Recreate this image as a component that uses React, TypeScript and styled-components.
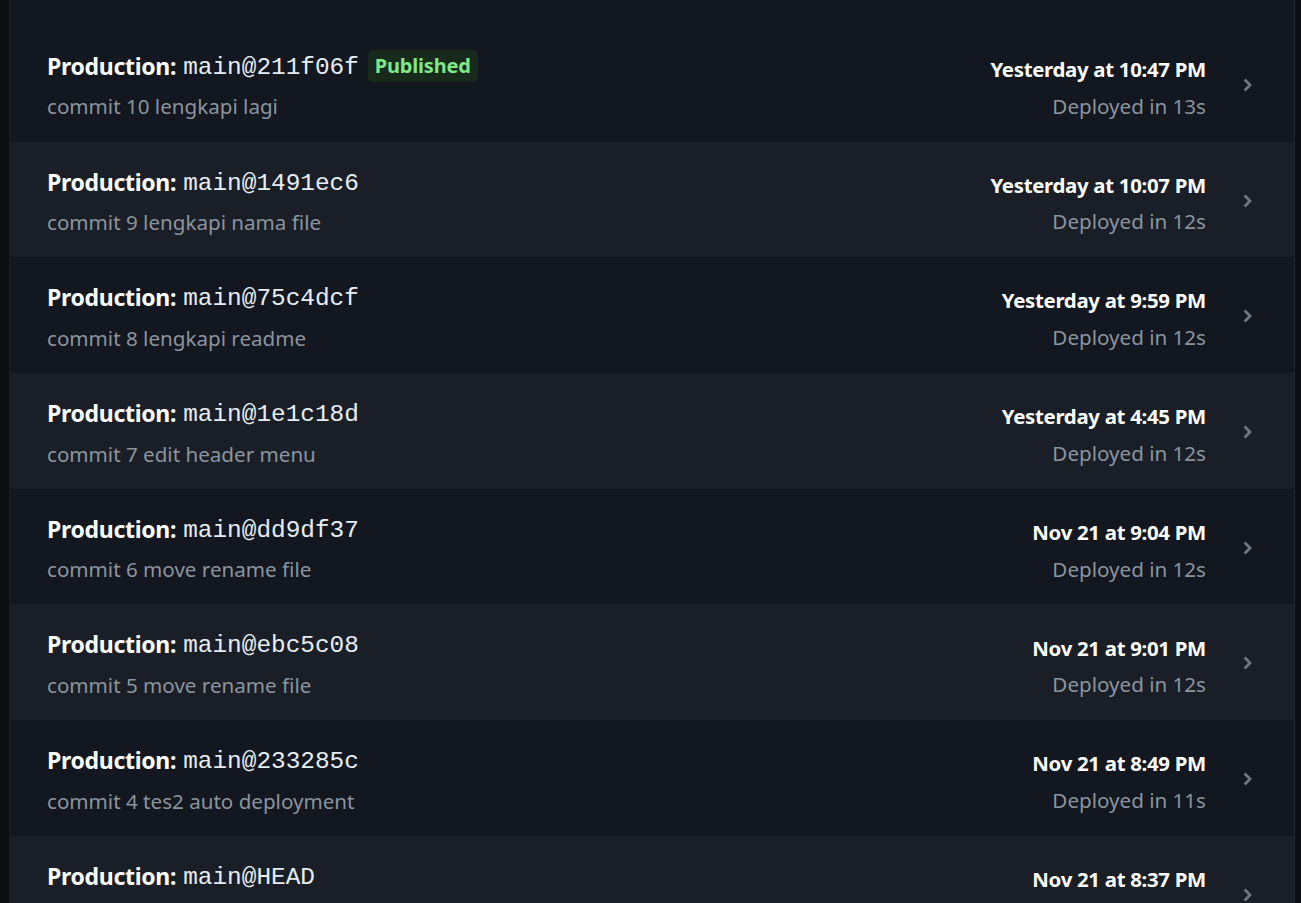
import React from "react";
import styled, { createGlobalStyle } from "styled-components";

const Global = createGlobalStyle`
  html, body { margin: 0; padding: 0; background: #0b0e13; }
  body { font-family: "Noto Sans", "Open Sans", sans-serif; }
`;

const Page = styled.div`
  display: flex;
  height: 903px;
  overflow: hidden;
  background: #0b0e13;
`;

const Panel = styled.div`
  margin-left: 9px;
  width: 1286px;
  border-left: 1px solid #1a1f26;
  border-right: 1px solid #232830;
  background: #121720;
  padding-top: 26px;
  box-sizing: border-box;
`;

const Row = styled.div<{ $alt: boolean }>`
  display: flex;
  align-items: center;
  height: 115.7px;
  padding: 0 41px 0 37px;
  background: ${(p) => (p.$alt ? "#1a1f27" : "#121720")};
  box-sizing: border-box;
`;

const Left = styled.div`
  flex: 1;
  display: flex;
  flex-direction: column;
  gap: 10.5px;
  margin-top: 3.4px;
`;

const TitleLine = styled.div`
  display: flex;
  align-items: center;
  height: 32px;
`;

const Label = styled.span`
  font-size: 23px;
  font-weight: 700;
  color: #ffffff;
  letter-spacing: -0.3px;
`;

const Ref = styled.span`
  font-family: "Liberation Mono", "Courier New", monospace;
  font-size: 24.4px;
  color: #e6edf3;
  margin-left: 7px;
  margin-top: 3px;
`;

const Badge = styled.span`
  margin-left: 9px;
  padding: 2px 7px 3px;
  border-radius: 5px;
  background: #172a1c;
  color: #7ee787;
  font-size: 20px;
  font-weight: 700;
  letter-spacing: -0.2px;
`;

const Message = styled.div`
  font-size: 20.6px;
  line-height: 28.6px;
  color: #8b949e;
`;

const Right = styled.div`
  display: flex;
  flex-direction: column;
  align-items: flex-end;
  gap: 8px;
  margin-top: 8.8px;
`;

const When = styled.div`
  font-size: 20.4px;
  line-height: 27.7px;
  font-weight: 700;
  color: #ffffff;
  letter-spacing: -0.3px;
`;

const Duration = styled.div`
  font-size: 20.6px;
  line-height: 28.6px;
  color: #8b949e;
`;

const Chevron = styled.div`
  width: 10px;
  margin-left: 37px;
  margin-top: 2px;
  display: flex;
  align-items: center;
  justify-content: center;
  color: #6e7681;
`;

type Deploy = { ref: string; msg: string; when: string; dur: string; published?: boolean };

const deploys: Deploy[] = [
  { ref: "211f06f", msg: "commit 10 lengkapi lagi", when: "Yesterday at 10:47 PM", dur: "Deployed in 13s", published: true },
  { ref: "1491ec6", msg: "commit 9 lengkapi nama file", when: "Yesterday at 10:07 PM", dur: "Deployed in 12s" },
  { ref: "75c4dcf", msg: "commit 8 lengkapi readme", when: "Yesterday at 9:59 PM", dur: "Deployed in 12s" },
  { ref: "1e1c18d", msg: "commit 7 edit header menu", when: "Yesterday at 4:45 PM", dur: "Deployed in 12s" },
  { ref: "dd9df37", msg: "commit 6 move rename file", when: "Nov 21 at 9:04 PM", dur: "Deployed in 12s" },
  { ref: "ebc5c08", msg: "commit 5 move rename file", when: "Nov 21 at 9:01 PM", dur: "Deployed in 12s" },
  { ref: "233285c", msg: "commit 4 tes2 auto deployment", when: "Nov 21 at 8:49 PM", dur: "Deployed in 11s" },
  { ref: "HEAD", msg: "commit 3 initial", when: "Nov 21 at 8:37 PM", dur: "Deployed in 12s" },
];

const ChevronIcon = () => (
  <svg width="10" height="14" viewBox="0 0 10 14" fill="none">
    <path d="M2.6 2.6L7 7L2.6 11.4" stroke="currentColor" strokeWidth="2.8" strokeLinecap="square" />
  </svg>
);

export default function App() {
  return (
    <Page>
      <Global />
      <Panel>
        {deploys.map((d, i) => (
          <Row key={d.ref} $alt={i % 2 === 1}>
            <Left>
              <TitleLine>
                <Label>Production:</Label>
                <Ref>main@{d.ref}</Ref>
                {d.published && <Badge>Published</Badge>}
              </TitleLine>
              <Message>{d.msg}</Message>
            </Left>
            <Right>
              <When>{d.when}</When>
              <Duration>{d.dur}</Duration>
            </Right>
            <Chevron>
              <ChevronIcon />
            </Chevron>
          </Row>
        ))}
      </Panel>
    </Page>
  );
}
